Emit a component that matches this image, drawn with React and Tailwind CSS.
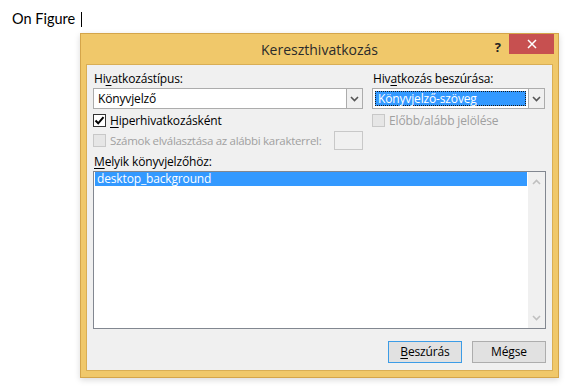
import React from 'react';

const ui = { fontFamily: '"Open Sans", "Noto Sans", sans-serif' };

const Chevron = ({ up = false, className = '' }) => (
  <svg className={className} width="9" height="6" viewBox="0 0 9 6" fill="none">
    <path
      d={up ? 'M1 5L4.5 1.5L8 5' : 'M1 1L4.5 4.5L8 1'}
      stroke="currentColor"
      strokeWidth="1.6"
    />
  </svg>
);

const Underlined = ({ text, index }) => (
  <>
    {text.slice(0, index)}
    <span className="underline underline-offset-2">{text[index]}</span>
    {text.slice(index + 1)}
  </>
);

const Combo = ({ value, selected = false, className = '' }) => (
  <div className={`flex h-[21px] border border-[#acacac] bg-white ${className}`}>
    <div className="flex flex-1 items-center px-[2px]">
      {selected ? (
        <span className="flex h-[15px] w-full items-center border border-dotted border-[#1a1a1a] bg-[#3399ff] px-[2px] text-white">
          {value}
        </span>
      ) : (
        <span className="px-[2px] text-[#000]">{value}</span>
      )}
    </div>
    <div className="flex w-[16px] items-center justify-center border-l border-[#acacac] bg-[#f0f0f0] text-[#555]">
      <Chevron />
    </div>
  </div>
);

const CheckBox = ({ checked = false, disabled = false }) => (
  <span
    className={`flex h-[13px] w-[13px] shrink-0 items-center justify-center border ${
      disabled ? 'border-[#c8c8c8] bg-[#e6e6e6]' : 'border-[#333] bg-white'
    }`}
  >
    {checked && (
      <svg width="11" height="11" viewBox="0 0 11 11" fill="none">
        <path d="M1.5 5.5L4.2 8.3L9.5 2.2" stroke="#000" strokeWidth="2" />
      </svg>
    )}
  </span>
);

export default function App() {
  return (
    <div className="h-[388px] w-[570px] bg-white">
      <div
        className="flex h-[33px] items-start pl-[12px] pt-[10px] text-[14.5px] text-black"
        style={{ fontFamily: 'Lato, "Open Sans", sans-serif' }}
      >
        <span className="leading-[17px]">On Figure</span>
        <span className="ml-[6px] mt-[2px] h-[15px] w-px bg-black" />
      </div>

      <div
        className="ml-[80px] flex h-[345px] w-[479px] flex-col whitespace-nowrap border border-[#d4a54a] bg-[#f0c86a] px-[5px] pb-[6px] shadow-[0_2px_6px_rgba(0,0,0,0.15)]"
        style={ui}
      >
        <div className="relative flex h-[30px] shrink-0 items-center justify-center">
          <span className="text-[14px] text-[#2b2b2b]">Kereszthivatkozás</span>
          <span className="absolute right-[52px] top-[4px] text-[13px] font-bold text-[#222]">?</span>
          <span className="absolute right-[-1px] top-0 flex h-[20px] w-[45px] items-center justify-center bg-[#c75050]">
            <svg width="10" height="10" viewBox="0 0 10 10">
              <path d="M1 1L9 9M9 1L1 9" stroke="#fff" strokeWidth="1.5" />
            </svg>
          </span>
        </div>

        <div className="flex flex-1 flex-col border border-[#d9ae55] bg-[#f0f0f0] px-[6px] pt-[5px] text-[12px] tracking-[-0.15px] text-black">
          <div className="flex gap-[9px]">
            <div className="flex w-[270px] flex-col">
              <div className="h-[17px] pl-[1px] leading-[17px]">
                <Underlined text="Hivatkozástípus:" index={2} />
              </div>
              <Combo value="Könyvjelző" className="mt-[1px]" />
              <div className="mt-[5px] flex h-[13px] items-center gap-[4px]">
                <CheckBox checked />
                <span className="leading-[13px]">
                  <Underlined text="Hiperhivatkozásként" index={0} />
                </span>
              </div>
              <div className="mt-[4px] flex h-[19px] items-center">
                <CheckBox disabled />
                <span className="ml-[4px] text-[11.5px] tracking-[-0.3px] text-[#a0a0a0]">
                  Számok elválasztása az alábbi karakterrel:
                </span>
                <span className="ml-auto h-[19px] w-[29px] shrink-0 border border-[#c8c8c8] bg-[#f0f0f0]" />
              </div>
            </div>

            <div className="flex w-[173px] flex-col">
              <div className="h-[17px] pl-[1px] leading-[17px]">
                <Underlined text="Hivatkozás beszúrása:" index={3} />
              </div>
              <Combo value="Könyvjelző-szöveg" selected className="mt-[1px]" />
              <div className="mt-[5px] flex h-[13px] items-center gap-[4px]">
                <CheckBox disabled />
                <span className="leading-[13px] text-[#a0a0a0]">Előbb/alább jelölése</span>
              </div>
            </div>
          </div>

          <div className="mt-[3px] h-[17px] pl-[1px] leading-[17px]">
            <Underlined text="Melyik könyvjelzőhöz:" index={0} />
          </div>
          <div className="mt-[1px] flex h-[158px] border border-[#828790] bg-white">
            <div className="flex-1 px-px">
              <div className="h-[14px] bg-[#3399ff] pl-[2px] leading-[14px] text-white">desktop_background</div>
            </div>
            <div className="flex w-[17px] flex-col items-center justify-between bg-[#f0f0f0] py-[7px] text-[#c0c0c0]">
              <Chevron up />
              <Chevron />
            </div>
          </div>

          <div className="mt-[12px] flex justify-end gap-[10px]">
            <button className="flex h-[22px] w-[74px] items-center justify-center border border-[#3c9ce6] bg-[#e1e1e1]">
              <Underlined text="Beszúrás" index={0} />
            </button>
            <button className="flex h-[22px] w-[74px] items-center justify-center border border-[#adadad] bg-[#e1e1e1]">
              Mégse
            </button>
          </div>
        </div>
      </div>
    </div>
  );
}
